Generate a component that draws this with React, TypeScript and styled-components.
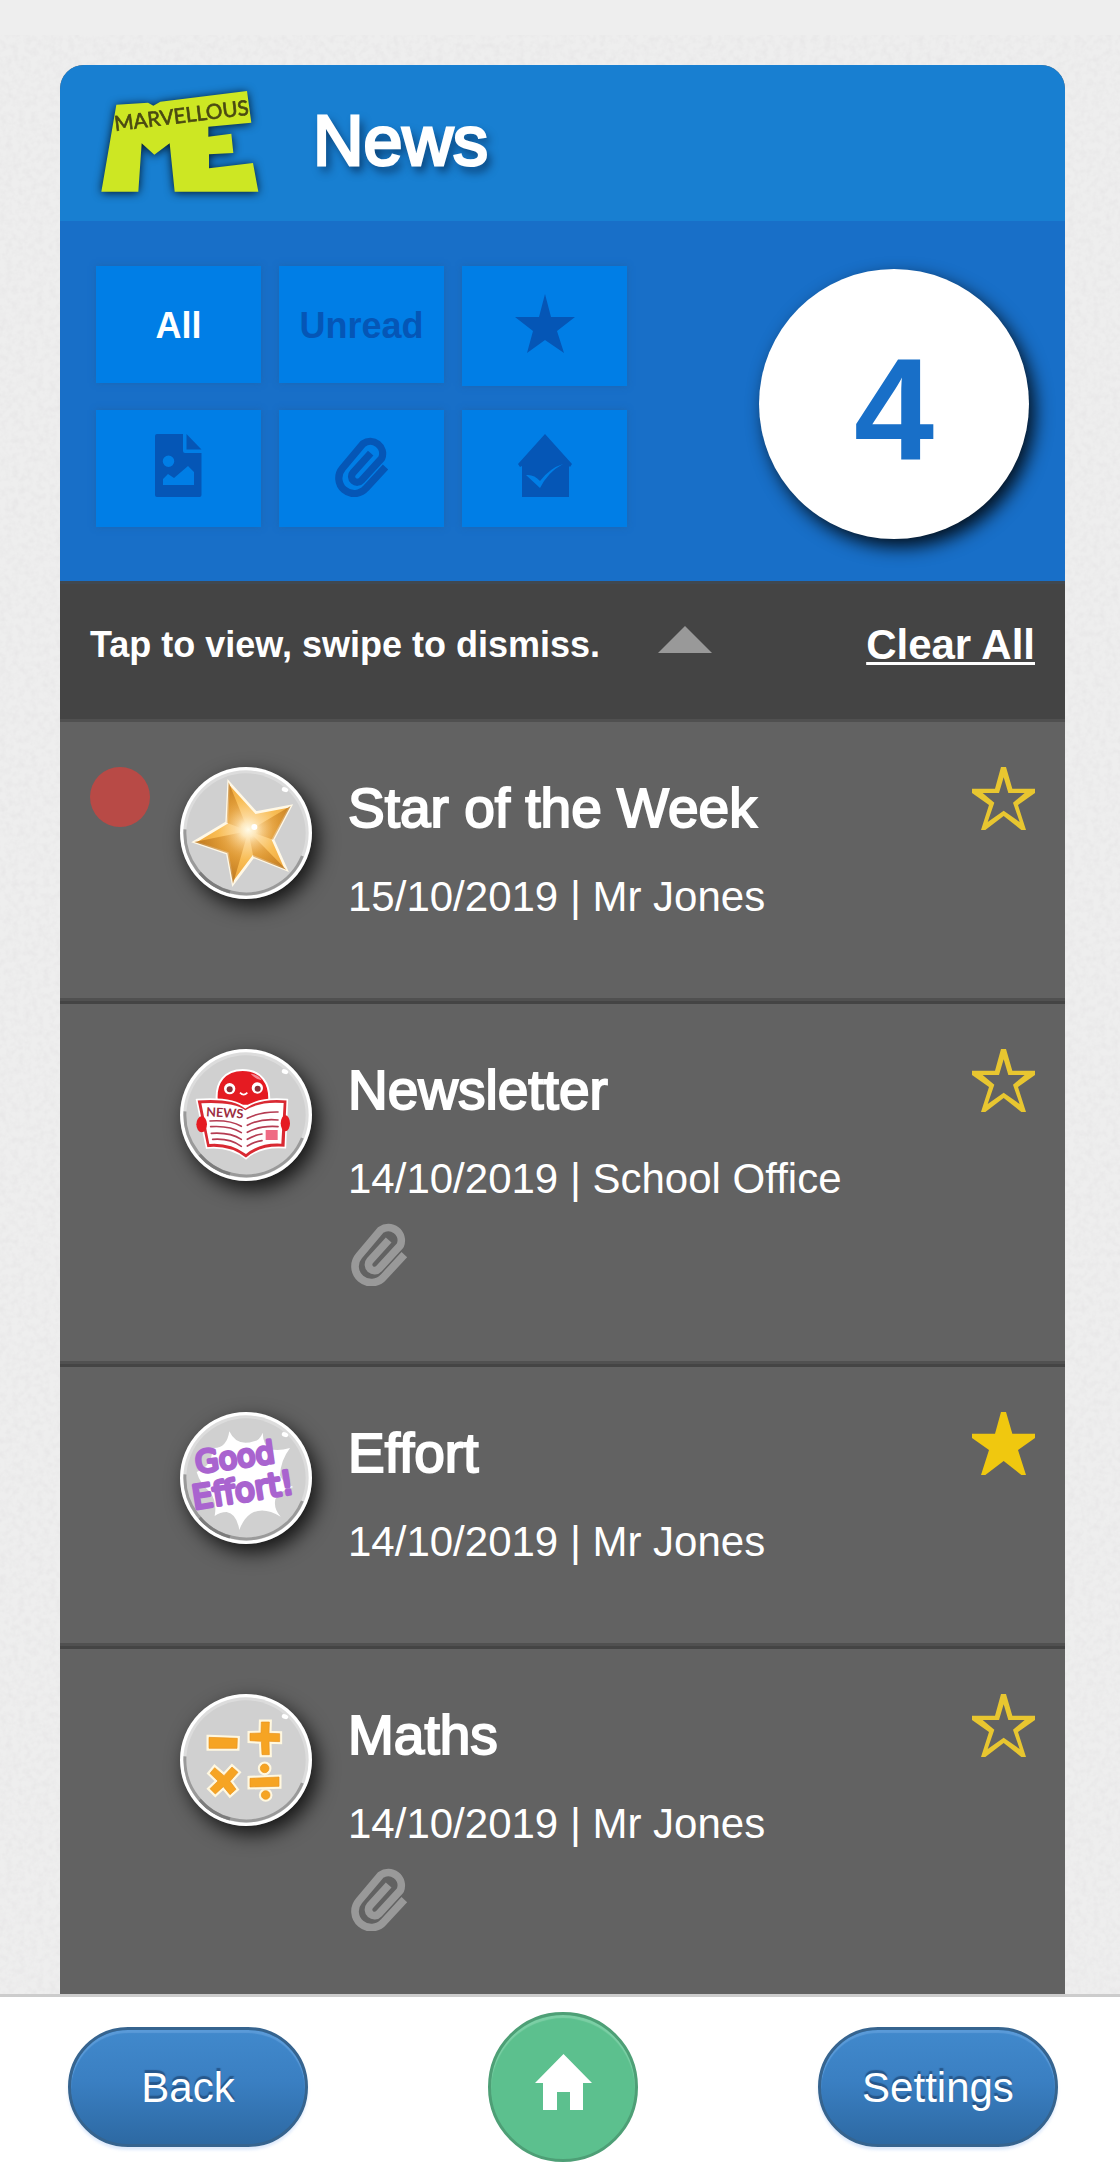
import React, { useState } from 'react';
import styled, { createGlobalStyle, css } from 'styled-components';

const GlobalStyle = createGlobalStyle`
  *, *::before, *::after { box-sizing: border-box; }
  body {
    margin: 0;
    background: #ececec;
    color: #fff;
    font-family: "Liberation Sans", Arial, Helvetica, sans-serif;
  }
  button { font: inherit; color: inherit; margin: 0; padding: 0; border: 0; background: none; cursor: pointer; }
  h1, h2, p, ul { margin: 0; padding: 0; }
  svg { display: block; }
`;

/* ---------- layout ---------- */

const Screen = styled.div`
  position: relative;
  display: flex;
  flex-direction: column;
  min-height: 100vh;
`;

const Texture = styled.svg`
  position: absolute;
  inset: 0;
  width: 100%;
  height: 100%;
  z-index: -1;
`;

const StatusStrip = styled.div`
  height: 35px;
  background: #eeeeee;
`;

const Main = styled.main`
  flex: 1;
  display: flex;
  flex-direction: column;
  padding: 30px 55px 0 60px;
`;

const Card = styled.section`
  flex: 1;
  display: flex;
  flex-direction: column;
  border-radius: 24px 24px 0 0;
  overflow: hidden;
  background: #626262;
`;

const CardHeader = styled.header`
  display: flex;
  align-items: center;
  gap: 54px;
  height: 156px;
  padding: 0 41px 4px;
  background: #187fd1;
`;

const PageTitle = styled.h1`
  font-size: 70px;
  line-height: 80px;
  font-weight: 400;
  -webkit-text-stroke: 3px #fff;
  text-shadow: 4px 6px 10px rgba(0, 20, 50, 0.75);
`;

const LogoSvg = styled.svg`
  overflow: visible;
  filter: drop-shadow(0 1px 5px rgba(0, 10, 20, 0.9));
`;

const FilterPanel = styled.div`
  display: flex;
  justify-content: space-between;
  align-items: flex-start;
  gap: 24px;
  padding: 45px 36px 42px;
  background: #186fc8;
`;

const FilterGrid = styled.div`
  display: grid;
  grid-template-columns: repeat(3, 165px);
  align-items: start;
  gap: 24px 18px;
`;

const FilterButton = styled.button<{ $active?: boolean; $icon?: boolean; $tall?: boolean }>`
  display: flex;
  align-items: center;
  justify-content: center;
  height: ${p => (p.$tall ? 120 : 117)}px;
  padding: ${p => (p.$icon ? '0 0 6px' : '2px 0 0')};
  background: #007ee6;
  box-shadow: 0 0 6px rgba(30, 100, 170, 0.8);
  color: ${p => (p.$active ? '#fff' : '#0556b6')};
  font-size: 36px;
  font-weight: 700;
`;

const CountCircle = styled.output`
  display: flex;
  align-items: center;
  justify-content: center;
  width: 270px;
  height: 270px;
  margin-top: 3px;
  padding-top: 12px;
  border-radius: 50%;
  background: #fff;
  color: #186fc8;
  font-size: 144px;
  font-weight: 700;
  line-height: 1;
  box-shadow: 6px 8px 18px rgba(0, 0, 0, 0.85);
`;

const HintBar = styled.div`
  display: flex;
  align-items: center;
  height: 141px;
  padding: 0 30px 14px;
  border-top: 3px solid #404850;
  border-bottom: 3px solid #505050;
  background: #444;
`;

const Hint = styled.p`
  font-size: 36px;
  line-height: 42px;
  font-weight: 700;
`;

const CollapseButton = styled.button`
  margin-left: 58px;
  padding-bottom: 10px;
`;

const ClearLink = styled.a`
  margin-left: auto;
  color: #fff;
  font-size: 42px;
  line-height: 48px;
  font-weight: 700;
  text-decoration: underline;
  text-decoration-thickness: 3px;
  text-underline-offset: 3px;
  text-decoration-skip-ink: none;
`;

/* ---------- list ---------- */

const List = styled.ul`
  flex: 1;
  display: flex;
  flex-direction: column;
  list-style: none;
`;

const Row = styled.li`
  display: grid;
  grid-template-columns: 60px 132px minmax(0, 1fr) 63px;
  align-items: start;
  padding: 45px 30px 70px;
  border-bottom: 3px solid #444;
  box-shadow: inset 0 -3px #505050;

  &:last-child {
    flex: 1;
    padding-bottom: 0;
    border-bottom: 0;
    box-shadow: none;
  }
`;

const UnreadDot = styled.span<{ $unread: boolean }>`
  width: 60px;
  height: 60px;
  border-radius: 50%;
  background: ${p => (p.$unread ? '#b84a46' : 'transparent')};
`;

const BadgeFrame = styled.div`
  width: 132px;
  height: 132px;
  margin-left: 30px;
  border-radius: 50%;
  box-shadow: 6px 8px 20px rgba(0, 0, 0, 0.8);
`;

const RowText = styled.div`
  padding-left: 66px;
`;

const RowTitle = styled.h2`
  font-size: 55px;
  line-height: 82px;
  font-weight: 400;
  -webkit-text-stroke: 2px #fff;
`;

const RowMeta = styled.p`
  margin-top: 14px;
  font-size: 42px;
  line-height: 68px;
`;

const Attachment = styled.div`
  padding: 7px 3px 8px;
  color: #999;
`;

const FavouriteButton = styled.button`
  width: 63px;
  height: 63px;
`;

/* ---------- footer ---------- */

const Footer = styled.footer`
  position: sticky;
  bottom: 0;
  display: flex;
  align-items: center;
  justify-content: space-between;
  height: 185px;
  padding: 0 62px 2px 68px;
  border-top: 3px solid #ccc;
  background: #fff;
`;

const raised = css`
  display: flex;
  align-items: center;
  justify-content: center;
  color: #fff;
`;

const PillButton = styled.button`
  ${raised}
  width: 240px;
  height: 120px;
  padding-top: 2px;
  border: 3px solid #36648f;
  border-radius: 60px;
  background: linear-gradient(#4189cc, #3a7fc2 45%, #2d69a3);
  box-shadow: inset 0 3px 1px #5a9ad8, 0 3px 3px rgba(200, 220, 250, 0.6);
  font-size: 42px;
  text-shadow: 0 -3px 1px rgba(30, 70, 115, 0.7);
`;

const HomeButton = styled.button`
  ${raised}
  width: 150px;
  height: 150px;
  padding-bottom: 10px;
  border: 3px solid #4e9f76;
  border-radius: 50%;
  background: #5cc08e;
  box-shadow: inset 0 3px 1px #7ccfa5;
`;

/* ---------- drawings ---------- */

const Logo = () => (
  <LogoSvg width="158" height="101" viewBox="62 60 474 303" role="img" aria-label="Marvellous Me">
    <path
      fill="#cde723"
      d="M108 101 203 95 219 104 240 92 500 60 513 155 384 167V197L453 188 459 246 386 250V292L518 276 534 362H283L268 217 222 251 184 217 174 362H63Z"
    />
    <text
      transform="translate(105 180) rotate(-7)"
      fontFamily="Lato, sans-serif"
      fontSize="62"
      fill="#4a4a12"
      stroke="#4a4a12"
      strokeWidth="2"
    >
      MARVELLOUS
    </text>
  </LogoSvg>
);

const SolidStar = () => (
  <svg width="60" height="59" viewBox="0 0 60 59" fill="currentColor" aria-hidden="true">
    <path d="M30 0 36 23H60L42 37 49 59 30 46 12 59 18 37 0 23H24Z" />
  </svg>
);

const PictureFile = () => (
  <svg width="47" height="63" viewBox="0 0 47 63" fill="currentColor" aria-hidden="true">
    <path
      fillRule="evenodd"
      d="M2 0H28V17Q28 19 30 19H46.500V61Q46.500 63 44.500 63H2Q0 63 0 61V2Q0 0 2 0ZM13.500 21.500A5.700 5.700 0 1 0 13.500 33A5.700 5.700 0 1 0 13.500 21.500ZM8 51V45L13 40 19 44 33 32 39 38V51Z"
    />
    <path d="M31.500 0 46.500 15.500H31.500Z" />
  </svg>
);

const Clip = ({ width, height }: { width: number; height: number }) => (
  <svg width={width} height={height} viewBox="0 0 171 198" aria-hidden="true">
    <path
      fill="none"
      stroke="currentColor"
      strokeWidth="23"
      strokeLinejoin="round"
      d="M160 104 98 171A48 48 0 0 1 24 107L89 30A39 39 0 0 1 148 76L84 146A17 17 0 0 1 57 122L113 60"
    />
  </svg>
);

const HouseTick = () => (
  <svg width="54" height="63" viewBox="0 0 54 63" fill="currentColor" aria-hidden="true">
    <path
      fillRule="evenodd"
      d="M27 0 54 30 52 33 51 32V63H4V32L2 33 0 30ZM8 41 22 54Q30 38 45 30 32 34 22 47 16 40 8 41Z"
    />
  </svg>
);

const HomeGlyph = () => (
  <svg width="57" height="56" viewBox="0 0 57 56" fill="#fff" aria-hidden="true">
    <path d="M28.500 0 57 29H48V56H35V38H22V56H8V29H0Z" />
  </svg>
);

const FavouriteStar = ({ filled }: { filled: boolean }) => (
  <svg width="63" height="63" viewBox="0 0 189 189" aria-hidden="true">
    <path
      fill={filled ? '#f0c80f' : '#e8c630'}
      fillRule="evenodd"
      d={
        'M87 0H102L121 65H189V78L138 114 162 189H148L95 147 40 189H27L51 114 0 78V65H69Z' +
        (filled ? '' : 'M95 31 81 78H32L67 107 47 165 95 131 143 165 123 107 158 78H109Z')
      }
    />
  </svg>
);

const Badge = ({ label, children }: { label: string; children: React.ReactNode }) => (
  <BadgeFrame>
    <svg width="132" height="132" viewBox="0 0 396 396" role="img" aria-label={label}>
      <circle cx="198" cy="198" r="198" fill="#fff" />
      <circle cx="198" cy="198" r="188" fill="#dcdcdc" />
      <circle cx="198" cy="198" r="179" fill="#d0d0d0" />
      <path d="M15 187A183 183 0 0 0 367 267" fill="none" stroke="#9a9a9a" strokeWidth="9" />
      <path d="M59 317A183 183 0 0 0 150 375" fill="none" stroke="#7c7c7c" strokeWidth="9" />
      <ellipse cx="315" cy="68" rx="10" ry="7" fill="#fff" transform="rotate(20 315 68)" />
      {children}
    </svg>
  </BadgeFrame>
);

const GoldStarArt = () => (
  <>
    <defs>
      <radialGradient id="goldGlow" gradientUnits="userSpaceOnUse" cx="205" cy="188" r="140">
        <stop offset="0" stopColor="#fffbe8" />
        <stop offset="0.3" stopColor="#fcd796" />
        <stop offset="0.65" stopColor="#f8bd55" />
        <stop offset="1" stopColor="#f2ac40" />
      </radialGradient>
      <radialGradient id="goldShade" gradientUnits="userSpaceOnUse" cx="205" cy="188" r="150">
        <stop offset="0.15" stopColor="#d98a25" stopOpacity="0" />
        <stop offset="0.5" stopColor="#d18420" stopOpacity="0.5" />
        <stop offset="1" stopColor="#b8741d" stopOpacity="0.8" />
      </radialGradient>
    </defs>
    <path
      d="M146 46 228 137 332 117 279 218 319 308 220 269 159 350 142 259 43 225 140 167Z"
      fill="url(#goldGlow)"
      stroke="#fff8e6"
      strokeWidth="8"
    />
    <path
      d="M146 46 140 167 205 192ZM332 117 279 218 205 192ZM319 308 220 269 205 192ZM159 350 142 259 205 192ZM43 225 142 259 205 192Z"
      fill="url(#goldShade)"
    />
    <circle cx="223" cy="180" r="9" fill="#fff" />
  </>
);

const NewsletterArt = () => (
  <>
    <path
      d="M112 170C100 95 140 63 188 63 240 63 276 100 266 170Z"
      fill="#e51b22"
      stroke="#fff"
      strokeWidth="6"
    />
    <path d="M212 74Q238 78 245 94 225 90 212 74Z" fill="#f58a95" />
    <circle cx="149" cy="119" r="17" fill="#fff" />
    <circle cx="149" cy="121" r="9" fill="#8a3038" />
    <circle cx="232" cy="117" r="17" fill="#fff" />
    <circle cx="233" cy="119" r="9" fill="#8a3038" />
    <path d="M180 131Q191 143 202 131" fill="none" stroke="#fff" strokeWidth="5" />
    <path
      d="M50 152Q160 144 196 176 240 144 322 152L316 296Q240 290 198 329 150 290 80 297Z"
      fill="#d92932"
      stroke="#fff"
      strokeWidth="5"
    />
    <path d="M64 163Q160 158 196 184 240 156 311 162L304 284Q240 280 198 315 150 280 88 285Z" fill="#fff" />
    <ellipse cx="65" cy="226" rx="16" ry="24" fill="#e51b22" />
    <ellipse cx="316" cy="223" rx="14" ry="24" fill="#e51b22" />
    <text
      transform="translate(78 202) rotate(3)"
      fontFamily="Lato, sans-serif"
      fontSize="38"
      fontWeight="700"
      fill="#9b2c3f"
    >
      NEWS
    </text>
    <g fill="none" stroke="#b53c52" strokeWidth="5" strokeLinecap="round">
      <path d="M90 216Q150 212 184 232M92 233Q150 229 184 251M94 253Q150 249 184 271M98 271Q150 267 184 292" />
      <path d="M202 208Q240 188 294 189M202 229Q240 208 294 213M202 250Q240 229 294 233M202 271Q225 257 246 255M202 291Q225 277 246 275" />
    </g>
    <rect x="257" y="243" width="36" height="30" fill="#ef6b84" />
  </>
);

const EffortArt = () => (
  <>
    <path
      d="M148 58Q170 105 222 88 240 84 248 62 250 100 270 111 295 118 330 108 302 145 300 190 310 215 340 225 300 235 286 262 280 290 302 314 250 282 212 305 190 320 178 354 170 305 140 300 120 300 104 312 112 270 90 240 60 215 50 180 100 160 96 108 140 112 148 58Z"
      fill="#fff"
    />
    <g
      fontFamily="'DejaVu Sans', sans-serif"
      fill="#a964cf"
      stroke="#a964cf"
      strokeWidth="10"
      strokeLinejoin="round"
    >
      <text transform="translate(50 184) rotate(-8)" fontSize="91">Good</text>
      <text transform="translate(42 292) rotate(-9)" fontSize="98">Effort!</text>
    </g>
  </>
);

const mathsMarks =
  'M87 130 172 133 171 163 87 163ZM244 84 268 84 267 118 299 119 299 143 267 142 268 182 246 182 244 142 210 140 210 118 243 117ZM104 221 132 245 156 219 174 235 150 262 168 286 150 302 130 278 106 300 90 284 114 261 90 238ZM210 253 297 249 297 277 210 279ZM254 210A13 13 0 1 0 254 236A13 13 0 1 0 254 210ZM257 290A13 13 0 1 0 257 316A13 13 0 1 0 257 290Z';

const MathsArt = () => (
  <>
    <path d={mathsMarks} fill="#fff8e0" stroke="#fff8e0" strokeWidth="15" />
    <path d={mathsMarks} fill="#f6a423" stroke="#e8931c" strokeWidth="2" />
  </>
);

/* ---------- data ---------- */

const initialItems = [
  { id: 1, title: 'Star of the Week', date: '15/10/2019', from: 'Mr Jones', art: GoldStarArt, unread: true, clip: false, favourite: false },
  { id: 2, title: 'Newsletter', date: '14/10/2019', from: 'School Office', art: NewsletterArt, unread: false, clip: true, favourite: false },
  { id: 3, title: 'Effort', date: '14/10/2019', from: 'Mr Jones', art: EffortArt, unread: false, clip: false, favourite: true },
  { id: 4, title: 'Maths', date: '14/10/2019', from: 'Mr Jones', art: MathsArt, unread: false, clip: true, favourite: false },
];

const filters = [
  { id: 'all', label: 'All', icon: null },
  { id: 'unread', label: 'Unread', icon: null },
  { id: 'favourites', label: 'Favourites', icon: <SolidStar /> },
  { id: 'pictures', label: 'Pictures', icon: <PictureFile /> },
  { id: 'attachments', label: 'Attachments', icon: <Clip width={54} height={63} /> },
  { id: 'home', label: 'Done at home', icon: <HouseTick /> },
];

export default function App() {
  const [filter, setFilter] = useState('all');
  const [items, setItems] = useState(initialItems);

  const toggleFavourite = (id: number) =>
    setItems(list => list.map(i => (i.id === id ? { ...i, favourite: !i.favourite } : i)));

  return (
    <Screen>
      <GlobalStyle />
      <Texture aria-hidden="true">
        <filter id="paper" x="0" y="0" width="100%" height="100%">
          <feTurbulence type="fractalNoise" baseFrequency="0.16" numOctaves="3" seed="4" />
          <feColorMatrix values="0 0 0 0 0.75  0 0 0 0 0.74  0 0 0 0 0.75  0.9 0 0 0 -0.34" />
        </filter>
        <rect width="100%" height="100%" fill="#eeeeee" />
        <rect width="100%" height="100%" filter="url(#paper)" />
      </Texture>
      <StatusStrip />
      <Main>
        <Card>
          <CardHeader>
            <Logo />
            <PageTitle>News</PageTitle>
          </CardHeader>
          <FilterPanel>
            <FilterGrid>
              {filters.map(f => (
                <FilterButton
                  key={f.id}
                  type="button"
                  aria-label={f.label}
                  aria-pressed={filter === f.id}
                  $active={filter === f.id}
                  $icon={f.icon !== null}
                  $tall={f.id === 'favourites'}
                  onClick={() => setFilter(f.id)}
                >
                  {f.icon ?? f.label}
                </FilterButton>
              ))}
            </FilterGrid>
            <CountCircle>{items.length}</CountCircle>
          </FilterPanel>
          <HintBar>
            <Hint>Tap to view, swipe to dismiss.</Hint>
            <CollapseButton type="button" aria-label="Collapse">
              <svg width="54" height="27" viewBox="0 0 54 27" aria-hidden="true">
                <path d="M27 0 54 27H0Z" fill="#999" />
              </svg>
            </CollapseButton>
            <ClearLink href="#clear">Clear All</ClearLink>
          </HintBar>
          <List>
            {items.map(item => (
              <Row key={item.id}>
                <UnreadDot $unread={item.unread} />
                <Badge label={item.title}>
                  <item.art />
                </Badge>
                <RowText>
                  <RowTitle>{item.title}</RowTitle>
                  <RowMeta>
                    {item.date} | {item.from}
                  </RowMeta>
                  {item.clip && (
                    <Attachment>
                      <Clip width={57} height={66} />
                    </Attachment>
                  )}
                </RowText>
                <FavouriteButton
                  type="button"
                  aria-label="Favourite"
                  aria-pressed={item.favourite}
                  onClick={() => toggleFavourite(item.id)}
                >
                  <FavouriteStar filled={item.favourite} />
                </FavouriteButton>
              </Row>
            ))}
          </List>
        </Card>
      </Main>
      <Footer>
        <PillButton type="button">Back</PillButton>
        <HomeButton type="button" aria-label="Home">
          <HomeGlyph />
        </HomeButton>
        <PillButton type="button">Settings</PillButton>
      </Footer>
    </Screen>
  );
}
